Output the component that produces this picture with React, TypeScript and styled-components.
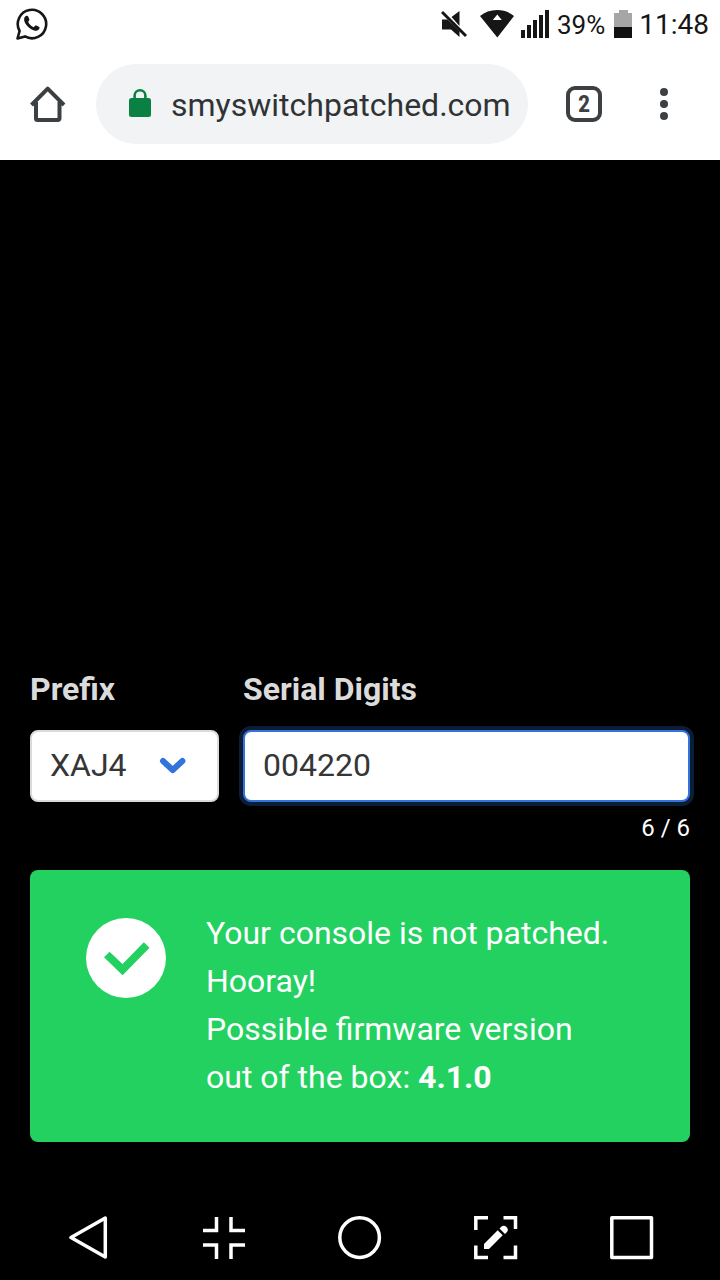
import React, { useState } from "react";
import styled, { createGlobalStyle } from "styled-components";

const GlobalStyle = createGlobalStyle`
  *, *::before, *::after { box-sizing: border-box; }
  body {
    margin: 0;
    background: #000;
    font-family: Roboto, "Liberation Sans", sans-serif;
  }
  button { font: inherit; color: inherit; background: none; border: 0; padding: 0; cursor: pointer; }
  svg { display: block; flex: none; }
`;

const Screen = styled.div`
  min-height: 100vh;
  display: flex;
  flex-direction: column;
`;

const StatusBar = styled.div`
  display: flex;
  justify-content: space-between;
  align-items: center;
  height: 48px;
  padding: 0 11px 0 15px;
  background: #fff;
  color: #161616;
`;

const StatusGroup = styled.div`
  display: flex;
  align-items: center;
`;

const StatusIcons = styled.div`
  display: flex;
  align-items: center;
  gap: 7px;
  margin-right: 8px;
`;

const StatusText = styled.span<{ $size: number }>`
  padding-top: 2px;
  font-size: ${(p) => p.$size}px;
  line-height: 40px;
`;

const Battery = styled.div`
  margin: 0 7px 0 9px;
`;

const Toolbar = styled.header`
  display: flex;
  align-items: center;
  height: 112px;
  padding-right: 16px;
  background: #fff;
  color: #3c4043;
`;

const ToolButton = styled.button<{ $width: number }>`
  display: flex;
  align-items: center;
  justify-content: center;
  flex: none;
  width: ${(p) => p.$width}px;
  height: 80px;
`;

const AddressBar = styled.label`
  flex: 1;
  min-width: 0;
  display: flex;
  align-items: center;
  gap: 20px;
  height: 80px;
  margin-right: 16px;
  padding: 0 16px 0 32px;
  border-radius: 40px;
  background: #f1f3f4;
`;

const AddressInput = styled.input`
  flex: 1;
  min-width: 0;
  height: 48px;
  padding: 2px 0 0;
  border: 0;
  outline: 0;
  background: none;
  color: #303336;
  font-family: inherit;
  font-size: 32px;
`;

const TabCount = styled.span`
  display: flex;
  align-items: center;
  justify-content: center;
  width: 36px;
  height: 36px;
  border: 4px solid #3c4043;
  border-radius: 9px;
  font-family: "Roboto Condensed", Roboto, sans-serif;
  font-size: 24px;
  font-weight: 700;
  line-height: 28px;
`;

const Page = styled.main`
  flex: 1;
  display: flex;
  flex-direction: column;
  justify-content: flex-end;
  padding: 24px 30px 54px;
`;

const FieldRow = styled.div`
  display: grid;
  grid-template-columns: 189px 1fr;
  gap: 24px;
`;

const Field = styled.div`
  display: flex;
  flex-direction: column;
`;

const FieldLabel = styled.label`
  margin-bottom: 17px;
  color: #dbdbdb;
  font-size: 32px;
  font-weight: 700;
  line-height: 48px;
`;

const SelectWrap = styled.div`
  position: relative;
`;

const Chevron = styled.svg`
  position: absolute;
  top: 27px;
  right: 32px;
  pointer-events: none;
`;

const Select = styled.select`
  appearance: none;
  width: 100%;
  height: 72px;
  padding: 0 64px 2px 18px;
  border: 2px solid #dbdbdb;
  border-radius: 8px;
  outline: 0;
  background: #fff;
  color: #363636;
  font-family: inherit;
  font-size: 32px;
`;

const TextInput = styled.input`
  width: 100%;
  height: 72px;
  padding: 0 18px 2px;
  border: 2px solid #3273dc;
  border-radius: 8px;
  outline: 0;
  box-shadow: 0 0 0 4px rgba(50, 115, 220, 0.25);
  background: #fff;
  color: #363636;
  font-family: inherit;
  font-size: 32px;
`;

const Counter = styled.small`
  margin-top: 8px;
  align-self: flex-end;
  color: #fff;
  font-size: 24px;
  line-height: 36px;
`;

const Notice = styled.section`
  display: flex;
  align-items: flex-start;
  gap: 40px;
  margin-top: 24px;
  padding: 39px 70px 41px 56px;
  border-radius: 8px;
  background: #23d160;
  color: #fff;
`;

const NoticeIcon = styled.svg`
  margin-top: 9px;
`;

const NoticeText = styled.p`
  flex: 1;
  margin: 0;
  font-size: 32px;
  line-height: 48px;
`;

const NavBar = styled.nav`
  display: flex;
  height: 84px;
  padding: 0 20px;
  background: #000;
  color: #fff;
`;

const NavButton = styled.button`
  flex: 1;
  display: flex;
  align-items: center;
  justify-content: center;
`;

const navIcons = [
  { label: "Back", art: <path d="M5 21.500 39.300 2V41Z" strokeLinejoin="round" /> },
  { label: "Shrink", art: <path d="M14.500 1v13.500H1M29 1v13.500H43M14.500 43V29H1M29 43V29H43" /> },
  { label: "Home", art: <circle cx="21.600" cy="21.600" r="19.800" /> },
  {
    label: "Capture",
    art: (
      <>
        <path d="M1.800 14V1.800H14M29.500 1.800h12v11.200M1.800 29.500v12H14M29.500 41.500h12v-12" />
        <path d="M10 33v-5L23.700 14.300l5 5L15 33ZM25.500 12.500l1.500-1.500a3.800 3.800 0 0 1 5.500 5.500L31 18Z" fill="currentColor" stroke="none" />
      </>
    ),
  },
  { label: "Recents", art: <rect x="1.800" y="1.800" width="39.700" height="39.700" strokeLinejoin="round" /> },
];

export default function App() {
  const [url, setUrl] = useState("smyswitchpatched.com");
  const [prefix, setPrefix] = useState("XAJ4");
  const [digits, setDigits] = useState("004220");

  return (
    <Screen>
      <GlobalStyle />
      <StatusBar>
        <svg width="34" height="34" viewBox="0 0 34 34" fill="none">
          <path d="M2.500 31.500 4.600 24A14.200 14.200 0 1 1 10 29.400Z" stroke="#161616" strokeWidth="2.600" strokeLinejoin="round" />
          <path d="M10.200 9.500c1-1 2.500-1 3.100.3l1 2.400c.3.700-.1 1.300-1.200 2.600 1.200 2.600 2.900 4.300 5.600 5.400 1.200-1.500 1.700-2 2.500-1.700l2.700 1.200c1.100.600.700 2-.4 3.100-1.700 1.500-4.500.9-7.700-.9-3.300-2-5.700-4.800-6.500-7.900-.4-1.800-.1-3.500.9-4.500Z" fill="#161616" />
        </svg>
        <StatusGroup>
          <StatusIcons>
            <svg width="32" height="28" viewBox="0 0 32 28" fill="#161616">
              <path d="M1 9.500h5.500L18.500 21v6L10 19.500H1ZM10.500 7 18.500 1v15Z" />
              <path d="M1 2 25 26" stroke="#161616" strokeWidth="3" />
            </svg>
            <svg width="34" height="28" viewBox="0 0 34 28" fill="#161616">
              <path fillRule="evenodd" d="M0 6Q7 0 17 0T34 6L17.300 27.500ZM17.300 4.500 12.800 10h9Z" />
            </svg>
            <svg width="28" height="28" viewBox="0 0 28 28" fill="#161616">
              <path d="M0 20h4v8H0ZM6 15h4v13H6ZM12 10h4v18h-4ZM18 5h4v23h-4ZM24 0h4v28h-4Z" />
            </svg>
          </StatusIcons>
          <StatusText $size={26}>39%</StatusText>
          <Battery>
            <svg width="18" height="28" viewBox="0 0 18 28">
              <path d="M5 0h9v3h4v14H0V3h5Z" fill="#a6a6a6" />
              <path d="M0 17h18v11H0Z" fill="#111" />
            </svg>
          </Battery>
          <StatusText $size={28}>11:48</StatusText>
        </StatusGroup>
      </StatusBar>

      <Toolbar>
        <ToolButton $width={96} aria-label="Home page">
          <svg width="36" height="36" viewBox="0 0 36 36" fill="none" stroke="#3c4043" strokeWidth="4" strokeLinejoin="round">
            <path d="M1.500 19 17.700 2.700 34 19" />
            <path d="M6 16v16.500a1.500 1.500 0 0 0 1.500 1.500h20.500a1.500 1.500 0 0 0 1.500-1.500V16" />
          </svg>
        </ToolButton>
        <AddressBar>
          <svg width="23" height="30" viewBox="0 0 23 30">
            <rect x="1" y="9" width="22" height="19" rx="2.500" fill="#0b8043" />
            <path d="M6.600 11V6.700a5.400 5.400 0 0 1 10.800 0V11" fill="none" stroke="#0b8043" strokeWidth="2.600" />
          </svg>
          <AddressInput aria-label="Address" value={url} onChange={(e) => setUrl(e.target.value)} />
        </AddressBar>
        <ToolButton $width={80} aria-label="Open tabs">
          <TabCount>2</TabCount>
        </ToolButton>
        <ToolButton $width={80} aria-label="More options">
          <svg width="8" height="32" viewBox="0 0 8 32" fill="#3c4043">
            <circle cx="4" cy="4" r="4" />
            <circle cx="4" cy="16" r="4" />
            <circle cx="4" cy="28" r="4" />
          </svg>
        </ToolButton>
      </Toolbar>

      <Page>
        <FieldRow>
          <Field>
            <FieldLabel htmlFor="prefix">Prefix</FieldLabel>
            <SelectWrap>
              <Select id="prefix" value={prefix} onChange={(e) => setPrefix(e.target.value)}>
                <option>XAJ4</option>
              </Select>
              <Chevron width="28" height="20" viewBox="0 0 28 20" fill="none">
                <path d="M4 4 13.700 13 23.400 4" stroke="#3273dc" strokeWidth="6" strokeLinecap="round" strokeLinejoin="round" />
              </Chevron>
            </SelectWrap>
          </Field>
          <Field>
            <FieldLabel htmlFor="serial">Serial Digits</FieldLabel>
            <TextInput id="serial" maxLength={6} value={digits} onChange={(e) => setDigits(e.target.value)} />
            <Counter>{digits.length} / 6</Counter>
          </Field>
        </FieldRow>
        <Notice role="status">
          <NoticeIcon width="80" height="80" viewBox="0 0 80 80">
            <circle cx="40" cy="40" r="40" fill="#fff" />
            <path d="M20.800 36.500 36.500 51.700 60.700 27" fill="none" stroke="#23d160" strokeWidth="8" />
          </NoticeIcon>
          <NoticeText>
            Your console is not patched. Hooray!
            <br />
            Possible firmware version out of the box: <strong>4.1.0</strong>
          </NoticeText>
        </Notice>
      </Page>

      <NavBar aria-label="System">
        {navIcons.map(({ label, art }) => (
          <NavButton key={label} aria-label={label}>
            <svg width="44" height="44" viewBox="0 0 44 44" fill="none" stroke="currentColor" strokeWidth="3.500">
              {art}
            </svg>
          </NavButton>
        ))}
      </NavBar>
    </Screen>
  );
}
